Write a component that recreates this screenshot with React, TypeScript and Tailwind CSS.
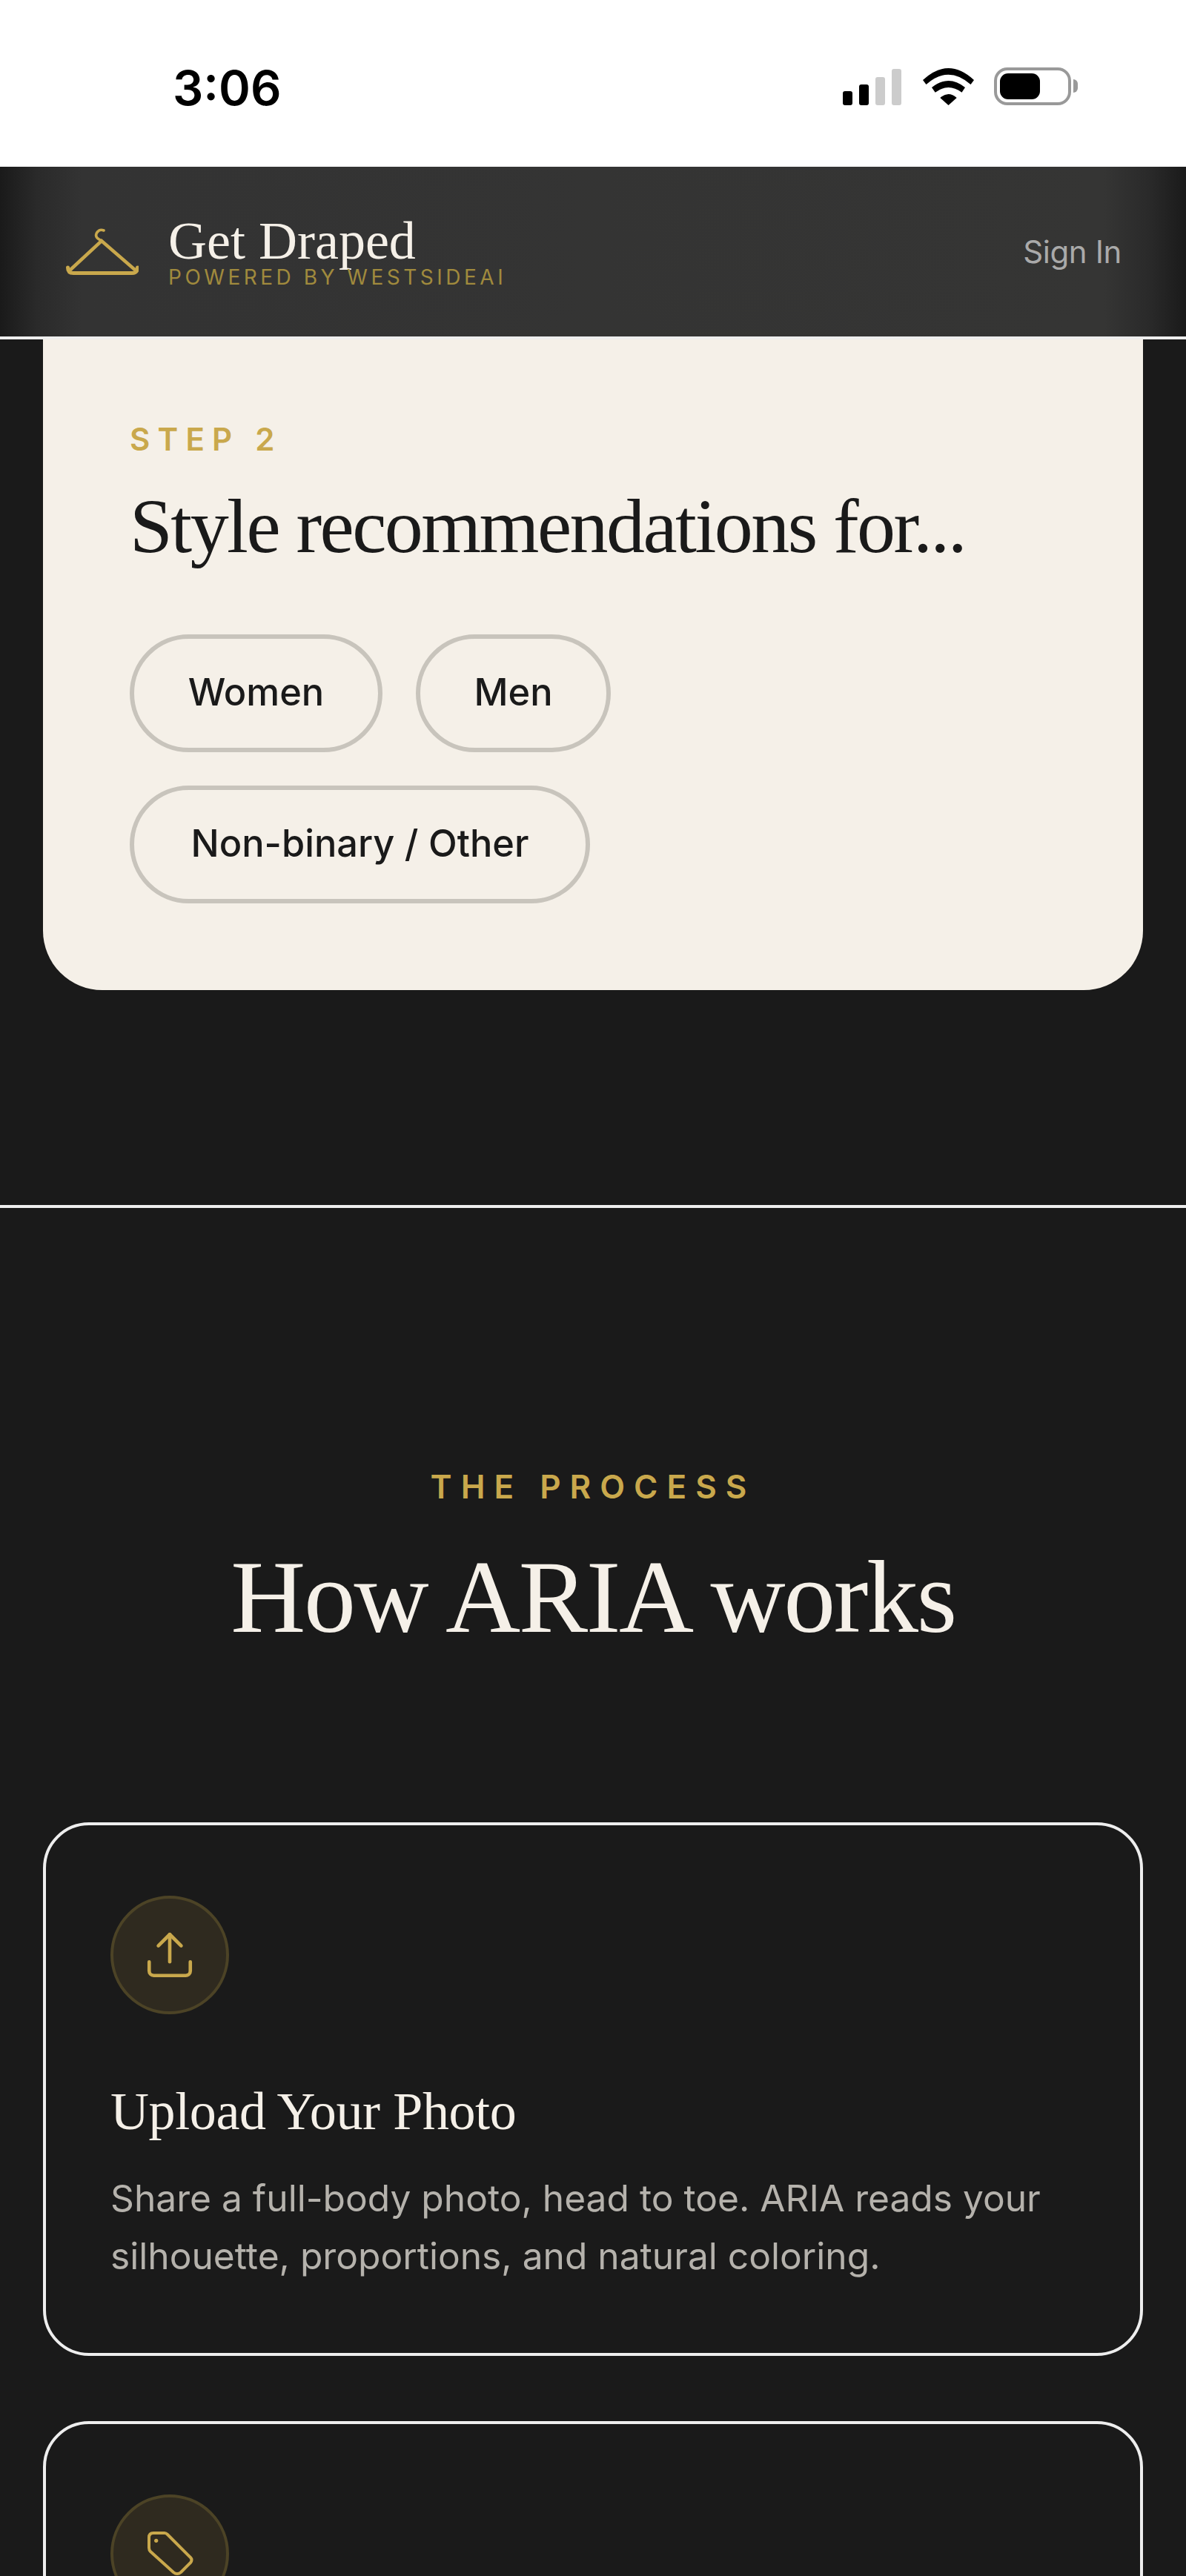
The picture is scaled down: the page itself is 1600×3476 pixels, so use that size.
import { Upload } from "lucide-react";

const serif = "font-['Liberation_Serif',serif]";
const sans = "font-['Inter',sans-serif]";

function StatusIcons() {
  return (
    <div className="flex items-end">
      <div className="flex items-end gap-[9px]">
        <div className="w-[13px] h-[19px] rounded-[3px] bg-black" />
        <div className="w-[13px] h-[28px] rounded-[3px] bg-black" />
        <div className="w-[13px] h-[38px] rounded-[3px] bg-[#cccccc]" />
        <div className="w-[13px] h-[49px] rounded-[3px] bg-[#cccccc]" />
      </div>
      <svg className="ml-[29px]" width="69" height="50" viewBox="0 0 69 50" fill="black">
        <path d="M0 16Q34.5 -16 69 16L64.5 22Q34.5 -4.6 4.5 22Z" />
        <path d="M12 26Q34.5 8 57 26L52.5 32.7Q34.5 19.3 16.7 32.7Z" />
        <path d="M23.3 40Q34.5 30 45.7 40L34.5 50Z" />
      </svg>
      <div className="ml-[27px] flex items-center">
        <div className="w-[104px] h-[51px] rounded-[18px] border-[4px] border-[#999999] p-[4px] flex">
          <div className="w-[54px] h-full rounded-[11px] bg-black" />
        </div>
        <div className="ml-[3px] w-[6px] h-[18px] rounded-r-full bg-[#999999]" />
      </div>
    </div>
  );
}

function HangerLogo() {
  return (
    <svg width="98" height="64" viewBox="0 0 98 64" fill="none" stroke="#c9a84c" strokeLinecap="round">
      <path d="M51 3C44 0 38 8 42 13C44 15 46 16 48 17" strokeWidth="3.6" />
      <path d="M6 56L48 17L93 56" strokeWidth="4.5" />
      <path d="M2.5 53Q2.5 60.5 10 60.5H89Q96.5 60.5 96.5 53" strokeWidth="5" />
    </svg>
  );
}

function TagIcon() {
  return (
    <svg width="80" height="80" viewBox="0 0 80 80" fill="none" stroke="#c9a84c" strokeWidth="4" strokeLinejoin="round">
      <path d="M18 12H33Q35 12 37 14L68 45Q71 48 68 52L55 65Q50 69 45 65L14 37Q12 35 12 32V18Q12 12 18 12Z" />
      <circle cx="21.7" cy="22.3" r="2.6" fill="#c9a84c" stroke="none" />
    </svg>
  );
}

function Pill({ label, width }: { label: string; width: string }) {
  return (
    <div className={`${width} h-[159px] pb-[4px] flex items-center justify-center rounded-full border-[6px] border-[#c8c4bc] text-[50.5px] font-medium text-[#1a1a1a] whitespace-nowrap ${sans}`}>
      {label}
    </div>
  );
}

function IconCircle({ children }: { children: React.ReactNode }) {
  return (
    <div className="w-[160px] h-[160px] rounded-full bg-[#2f2a1f] border-[4px] border-[#4c4326] flex items-center justify-center">
      {children}
    </div>
  );
}

export default function App() {
  return (
    <div className="w-[1600px] h-[3476px] overflow-hidden bg-[#1a1a1a]">
      <div className="h-[225px] bg-white flex items-center justify-between pl-[233px] pr-[146px] pt-[7px]">
        <span className={`mt-[5px] text-[65px] leading-none font-semibold text-black ${sans}`}>3:06</span>
        <StatusIcons />
      </div>

      <header className="h-[233px] border-b-[4px] border-[#eeeeee] bg-[linear-gradient(to_right,#1a1a1a_0px,#2a2a2a_50px,#333333_110px,#353534_1490px,#2a2a2a_1550px,#1a1a1a_1600px)] flex items-center justify-between pl-[89px] pr-[87px]">
        <div className="flex items-center">
          <HangerLogo />
          <div className="ml-[40px]">
            <div className={`text-[72px] leading-[69px] text-[#f5f0e8] ${serif}`}>Get Draped</div>
            <div className={`text-[28px] leading-[28px] tracking-[4.5px] text-[#a08a3d] ${sans}`}>POWERED BY WESTSIDEAI</div>
          </div>
        </div>
        <span className={`text-[42px] tracking-[-0.4px] text-[#aaaaaa] ${sans}`}>Sign In</span>
      </header>

      <section className="pb-[290px] border-b-[4px] border-[#eeeeee]">
        <div className="mx-[58px] rounded-b-[80px] bg-[#f5f0e8] pt-[105px] px-[117px] pb-[117px]">
          <div className={`text-[42px] leading-[60px] font-semibold tracking-[10.2px] text-[#c9a84c] ${sans}`}>STEP 2</div>
          <h2 className={`mt-[27px] text-[104px] leading-[120px] tracking-[-2.55px] text-[#1a1a1a] ${serif}`}>Style recommendations for...</h2>
          <div className="mt-[86px] flex flex-wrap gap-[45px] w-[900px]">
            <Pill label="Women" width="w-[341px]" />
            <Pill label="Men" width="w-[263px]" />
            <Pill label="Non-binary / Other" width="w-[621px]" />
          </div>
        </div>
      </section>

      <section className="pt-[346px]">
        <div className={`text-center text-[44px] leading-[60px] font-semibold tracking-[12px] text-[#c9a84c] ${sans}`}>THE PROCESS</div>
        <h2 className={`mt-[54px] text-center text-[140px] leading-[130px] tracking-[-2.4px] text-[#f5f0e8] ${serif}`}>How ARIA works</h2>
        <div className="mt-[239px] mx-[58px] flex flex-col gap-[88px]">
          <div className="rounded-[62px] border-[4px] border-[#eeeeee] pt-[95px] px-[87px] pb-[92px]">
            <IconCircle>
              <Upload size={74} strokeWidth={1.5} color="#c9a84c" />
            </IconCircle>
            <h3 className={`mt-[86px] text-[72px] leading-[90px] tracking-[-0.4px] text-[#f5f0e8] ${serif}`}>Upload Your Photo</h3>
            <p className={`mt-[33px] text-[49.7px] leading-[78px] whitespace-nowrap text-[#b5b2ac] ${sans}`}>
              Share a full-body photo, head to toe. ARIA reads your
              <br />
              silhouette, proportions, and natural coloring.
            </p>
          </div>
          <div className="rounded-[62px] border-[4px] border-[#eeeeee] pt-[95px] px-[87px] pb-[92px]">
            <IconCircle>
              <TagIcon />
            </IconCircle>
          </div>
        </div>
      </section>
    </div>
  );
}
